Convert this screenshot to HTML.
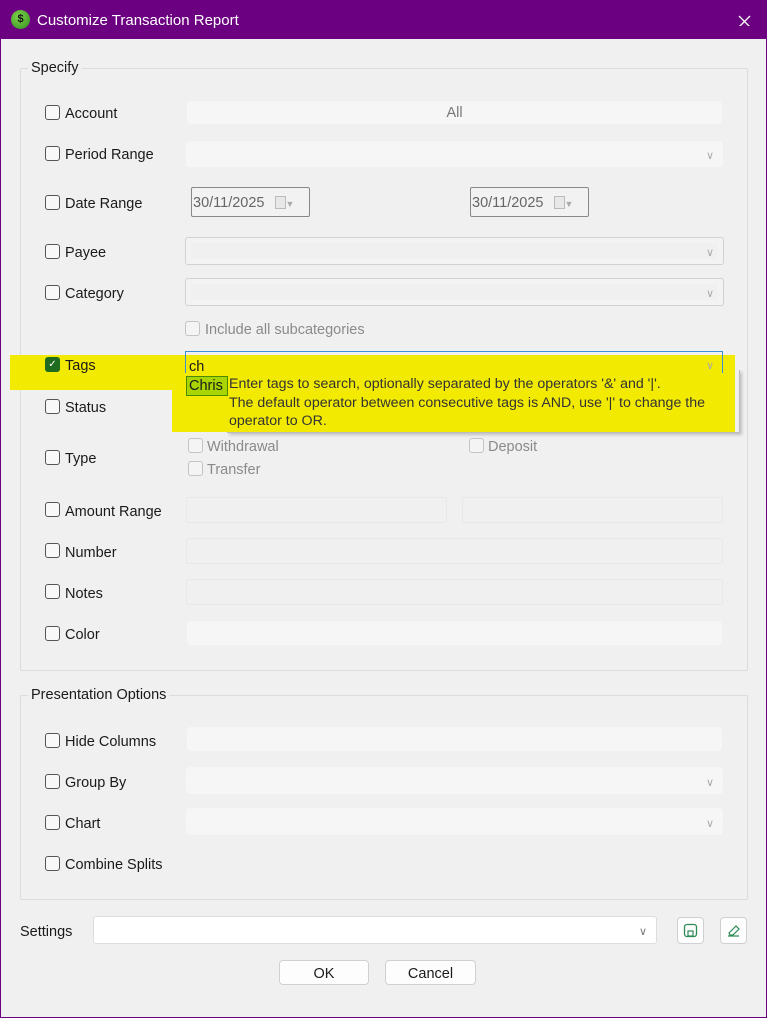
<!DOCTYPE html>
<html><head><meta charset="utf-8"><style>
*{box-sizing:border-box}
body{margin:0;width:767px;height:1018px;background:#f0f0f0;font-family:"Liberation Sans",sans-serif;font-size:14.5px;color:#1a1a1a;position:relative;overflow:hidden}
.a{position:absolute;padding-top:2px}
.title{left:0;top:0;width:767px;height:39px;background:#6b0080;color:#fff;font-size:15px}
.frame{left:0;top:0;width:767px;height:1018px;border:1px solid #6b0080;border-top:none;pointer-events:none}
.grp{border:1px solid #dcdcdc;border-radius:2px}
.glabel{background:#f0f0f0;padding:0 3px}
.cb{width:15px;height:15px;border:1px solid #555;border-radius:3px;background:#f8f8f8}
.cbd{width:15px;height:15px;border:1px solid #c4c4c4;border-radius:3px;background:#f4f4f4}
.f{background:#f6f6f6;border-radius:4px}
.fb{background:#f0f0f0;border:1px solid #d2d2d2;border-radius:3px;box-shadow:inset 0 0 0 5px #f3f3f3}
.fl{border:1px solid #e8e8e8;border-radius:2px;background:#f0f0f0}
.chev{color:#aaa;font-size:11px}
.dis{color:#8a8a8a}
.btn{background:#fdfdfd;border:1px solid #d0d0d0;border-radius:4px;text-align:center;line-height:22px}
</style></head><body>
<div class="a title" style="padding:0">
<div class="a" style="left:11px;top:10px;width:19px;height:19px;border-radius:50%;background:radial-gradient(circle at 40% 35%,#7fd34a,#2f8f1e);color:#111;font-size:11px;font-weight:bold;text-align:center;line-height:19px;padding:0">$</div>
<div class="a" style="left:37px;top:10px">Customize Transaction Report</div>
<svg class="a" style="left:738px;top:13px" width="13" height="13"><path d="M1 1L12 12M12 1L1 12" stroke="#fff" stroke-width="1.3"/></svg>
</div>

<div class="a grp" style="left:20px;top:68px;width:728px;height:603px"></div>
<div class="a glabel" style="left:28px;top:60px">Specify</div>

<div class="a" style="left:10px;top:355px;width:725px;height:35px;background:#f2ea00"></div>
<div class="a" style="left:172px;top:388px;width:563px;height:44px;background:#f2ea00"></div>

<div class="a cb" style="left:45px;top:105px"></div><div class="a" style="left:65px;top:104px">Account</div>
<div class="a f" style="left:187px;top:101px;width:535px;height:23px;text-align:center;line-height:21px;color:#777">All</div>

<div class="a cb" style="left:45px;top:146px"></div><div class="a" style="left:65px;top:145px">Period Range</div>
<div class="a f" style="left:186px;top:141px;width:537px;height:26px"></div><div class="a chev" style="left:706px;top:147px">&#8744;</div>

<div class="a cb" style="left:45px;top:195px"></div><div class="a" style="left:65px;top:194px">Date Range</div>
<div class="a" style="left:191px;top:187px;width:119px;height:30px;border:1px solid #888;border-radius:2px;background:#f2f2f2;color:#666;line-height:26px;padding-left:1px">30/11/2025 <span style="display:inline-block;width:11px;height:13px;border:1px solid #bbb;background:#e8e8e8;vertical-align:-2px;margin-left:6px"></span><span style="color:#aaa;font-size:9px">&#9660;</span></div>
<div class="a" style="left:470px;top:187px;width:119px;height:30px;border:1px solid #888;border-radius:2px;background:#f2f2f2;color:#666;line-height:26px;padding-left:1px">30/11/2025 <span style="display:inline-block;width:11px;height:13px;border:1px solid #bbb;background:#e8e8e8;vertical-align:-2px;margin-left:6px"></span><span style="color:#aaa;font-size:9px">&#9660;</span></div>

<div class="a cb" style="left:45px;top:244px"></div><div class="a" style="left:65px;top:243px">Payee</div>
<div class="a fb" style="left:185px;top:237px;width:539px;height:28px"></div><div class="a chev" style="left:706px;top:244px">&#8744;</div>

<div class="a cb" style="left:45px;top:285px"></div><div class="a" style="left:65px;top:284px">Category</div>
<div class="a fb" style="left:185px;top:278px;width:539px;height:28px"></div><div class="a chev" style="left:706px;top:285px">&#8744;</div>

<div class="a cbd" style="left:185px;top:321px"></div><div class="a dis" style="left:205px;top:320px">Include all subcategories</div>

<div class="a" style="left:45px;top:357px;width:15px;height:15px;border-radius:3px;background:#1f6b1f;color:#fff;font-size:10px;text-align:center;line-height:15px;padding:0">&#10003;</div><div class="a" style="left:65px;top:356px">Tags</div>
<div class="a" style="left:185px;top:351px;width:538px;height:22px;border:1px solid #3b8fd6;border-bottom:none"></div>
<div class="a" style="left:189px;top:357px">ch</div><div class="a chev" style="left:706px;top:357px">&#8744;</div>
<div class="a" style="left:186px;top:376px;width:42px;height:20px;border:1px solid #4a8a00;background:#a8d400;padding:1px 0 0 2px;line-height:17px;overflow:hidden;white-space:nowrap">Chris</div>
<div class="a" style="left:227px;top:370px;width:513px;height:63px;border-right:1px solid #bbb;border-bottom:1px solid #bbb;box-shadow:2px 2px 3px rgba(0,0,0,.2)"></div>
<div class="a" style="left:229px;top:373px;line-height:18.5px;font-size:14.2px;color:#333;white-space:nowrap">Enter tags to search, optionally separated by the operators '&amp;' and '|'.<br>The default operator between consecutive tags is AND, use '|' to change the<br>operator to OR.</div>

<div class="a cb" style="left:45px;top:399px"></div><div class="a" style="left:65px;top:398px">Status</div>

<div class="a cb" style="left:45px;top:450px"></div><div class="a" style="left:65px;top:449px">Type</div>
<div class="a cbd" style="left:188px;top:438px"></div><div class="a dis" style="left:207px;top:437px">Withdrawal</div>
<div class="a cbd" style="left:469px;top:438px"></div><div class="a dis" style="left:488px;top:437px">Deposit</div>
<div class="a cbd" style="left:188px;top:461px"></div><div class="a dis" style="left:207px;top:460px">Transfer</div>

<div class="a cb" style="left:45px;top:502px"></div><div class="a" style="left:65px;top:502px">Amount Range</div>
<div class="a fl" style="left:186px;top:497px;width:261px;height:26px"></div>
<div class="a fl" style="left:462px;top:497px;width:261px;height:26px"></div>

<div class="a cb" style="left:45px;top:543px"></div><div class="a" style="left:65px;top:543px">Number</div>
<div class="a fl" style="left:186px;top:538px;width:537px;height:26px"></div>

<div class="a cb" style="left:45px;top:584px"></div><div class="a" style="left:65px;top:584px">Notes</div>
<div class="a fl" style="left:186px;top:579px;width:537px;height:26px"></div>

<div class="a cb" style="left:45px;top:626px"></div><div class="a" style="left:65px;top:625px">Color</div>
<div class="a f" style="left:187px;top:621px;width:535px;height:24px"></div>

<div class="a grp" style="left:20px;top:695px;width:728px;height:205px"></div>
<div class="a glabel" style="left:28px;top:687px">Presentation Options</div>

<div class="a cb" style="left:45px;top:733px"></div><div class="a" style="left:65px;top:732px">Hide Columns</div>
<div class="a f" style="left:187px;top:727px;width:535px;height:24px"></div>
<div class="a cb" style="left:45px;top:774px"></div><div class="a" style="left:65px;top:773px">Group By</div>
<div class="a f" style="left:186px;top:767px;width:537px;height:27px"></div><div class="a chev" style="left:706px;top:774px">&#8744;</div>
<div class="a cb" style="left:45px;top:815px"></div><div class="a" style="left:65px;top:814px">Chart</div>
<div class="a f" style="left:186px;top:808px;width:537px;height:27px"></div><div class="a chev" style="left:706px;top:815px">&#8744;</div>
<div class="a cb" style="left:45px;top:856px"></div><div class="a" style="left:65px;top:855px">Combine Splits</div>

<div class="a" style="left:20px;top:922px">Settings</div>
<div class="a" style="left:93px;top:916px;width:564px;height:28px;background:#fff;border:1px solid #ddd;border-radius:3px"></div>
<div class="a chev" style="left:639px;top:923px;color:#777">&#8744;</div>
<div class="a btn" style="left:677px;top:917px;width:27px;height:27px;padding:0"><svg width="15" height="15" style="margin-top:5px"><rect x="1.5" y="1.5" width="12" height="12" rx="2.5" fill="none" stroke="#2e8b57" stroke-width="1.3"/><rect x="5" y="8" width="5" height="5" fill="none" stroke="#2e8b57" stroke-width="1.2"/></svg></div>
<div class="a btn" style="left:720px;top:917px;width:27px;height:27px;padding:0"><svg width="15" height="15" style="margin-top:5px"><path d="M2 13H13M3 10L10 3L13 6L7 12H4Z" fill="none" stroke="#2e8b57" stroke-width="1.2"/></svg></div>

<div class="a btn" style="left:279px;top:960px;width:90px;height:25px">OK</div>
<div class="a btn" style="left:385px;top:960px;width:91px;height:25px">Cancel</div>

<div class="a frame" style="padding:0"></div>
</body></html>
